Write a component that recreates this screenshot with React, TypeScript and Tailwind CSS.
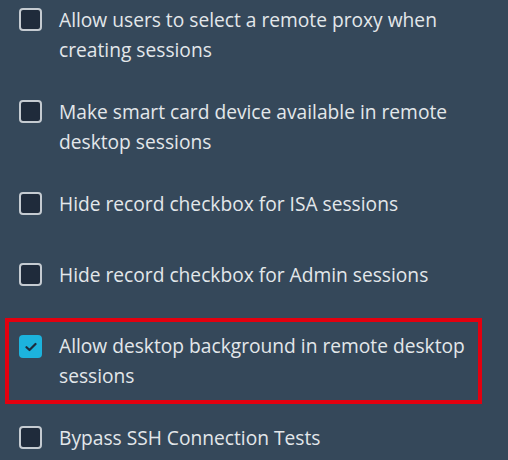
const options = [
  { label: 'Allow users to select a remote proxy when creating sessions', checked: false },
  { label: 'Make smart card device available in remote desktop sessions', checked: false },
  { label: 'Hide record checkbox for ISA sessions', checked: false },
  { label: 'Hide record checkbox for Admin sessions', checked: false },
  { label: 'Allow desktop background in remote desktop sessions', checked: true, highlight: true },
  { label: 'Bypass SSH Connection Tests', checked: false },
];

function Box({ checked }: { checked: boolean }) {
  if (checked) {
    return (
      <span className="mt-[4px] flex h-[23px] w-[23px] shrink-0 items-center justify-center rounded-[4px] bg-[#1cb3dd]">
        <svg width="12" height="10" viewBox="0 0 12 10" fill="none">
          <path d="M1.5 5.2 4.5 8 10.5 2" stroke="#1d2b3c" strokeWidth="2.2" strokeLinecap="round" strokeLinejoin="round" />
        </svg>
      </span>
    );
  }
  return <span className="mt-[3px] h-[23px] w-[23px] shrink-0 rounded-[4px] border-2 border-[#c5cbd1] bg-[#1f2b3b]" />;
}

export default function App() {
  return (
    <main className="h-[460px] w-[508px] overflow-hidden bg-[#35485a] pl-[19px] pt-[5px] font-['Open_Sans',sans-serif] text-[19.2px] leading-[30px] text-[#e3e7ea]">
      {options.map((o) => (
        <div key={o.label} className="relative flex min-h-[71px] items-start gap-[17px] pb-[32px]">
          <Box checked={o.checked} />
          <span className="w-[425px]">{o.label}</span>
          {o.highlight && (
            <div className="pointer-events-none absolute left-[-14px] top-[-13px] h-[86px] w-[477px] border-[4px] border-[#e3000f]" />
          )}
        </div>
      ))}
    </main>
  );
}
